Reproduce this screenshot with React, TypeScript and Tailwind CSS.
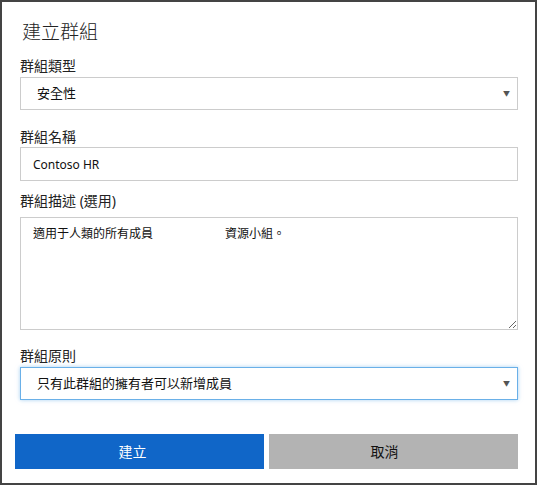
import React from "react";

const font = "font-['Noto_Sans','Noto_Sans_CJK_TC',sans-serif]";

function Label({ text, className = "" }: { text: string; className?: string }) {
  return (
    <div className={`h-[20px] text-[14px] leading-[20px] text-[#222] ${className}`}>
      {text}
    </div>
  );
}

function Select({ value, focused = false }: { value: string; focused?: boolean }) {
  return (
    <div className="relative">
      <select
        defaultValue={value}
        className={`block w-full h-[33px] appearance-none bg-white pl-[16px] text-[13px] text-[#111] outline-none border ${
          focused
            ? "border-[#6ab0e8] shadow-[0_0_4px_rgba(106,176,232,0.6)]"
            : "border-[#cccccc]"
        }`}
      >
        <option>{value}</option>
      </select>
      <span className="pointer-events-none absolute right-[8px] top-1/2 -translate-y-1/2 text-[7px] text-[#555]">
        ▼
      </span>
    </div>
  );
}

export default function App() {
  return (
    <div className={`w-[537px] h-[485px] border-2 border-[#444] bg-white ${font}`}>
      <div className="flex flex-col pl-[13px] pr-[17px]">
        <div className="flex flex-col pl-[5px]">
          <div className="mt-[18px] pl-[2px] h-[24px] text-[19px] font-light leading-[24px] text-[#222]">
            建立群組
          </div>

          <Label text="群組類型" className="mt-[12px] mb-[1px]" />
          <Select value="安全性" />

          <Label text="群組名稱" className="mt-[17px]" />
          <input
            defaultValue="Contoso HR"
            className="block w-full h-[34px] border border-[#cccccc] pl-[12px] text-[12px] text-[#111] outline-none"
          />

          <Label text="群組描述 (選用)" className="mt-[10px] mb-[6px]" />
          <textarea
            defaultValue={"適用于人類的所有成員　　　　　　資源小組。"}
            className="block w-full h-[113px] border border-[#cccccc] px-[12px] pt-[7px] text-[12px] leading-[18px] text-[#111] outline-none"
          />

          <Label text="群組原則" className="mt-[16px] mb-[1px]" />
          <Select value="只有此群組的擁有者可以新增成員" focused />
        </div>

        <div className="mt-[34px] grid grid-cols-2 gap-[5px]">
          <button className="h-[35px] bg-[#1066c8] pr-[14px] text-[14px] text-white">
            建立
          </button>
          <button className="h-[35px] bg-[#b3b3b3] pr-[18px] text-[14px] text-[#111]">
            取消
          </button>
        </div>
      </div>
    </div>
  );
}
